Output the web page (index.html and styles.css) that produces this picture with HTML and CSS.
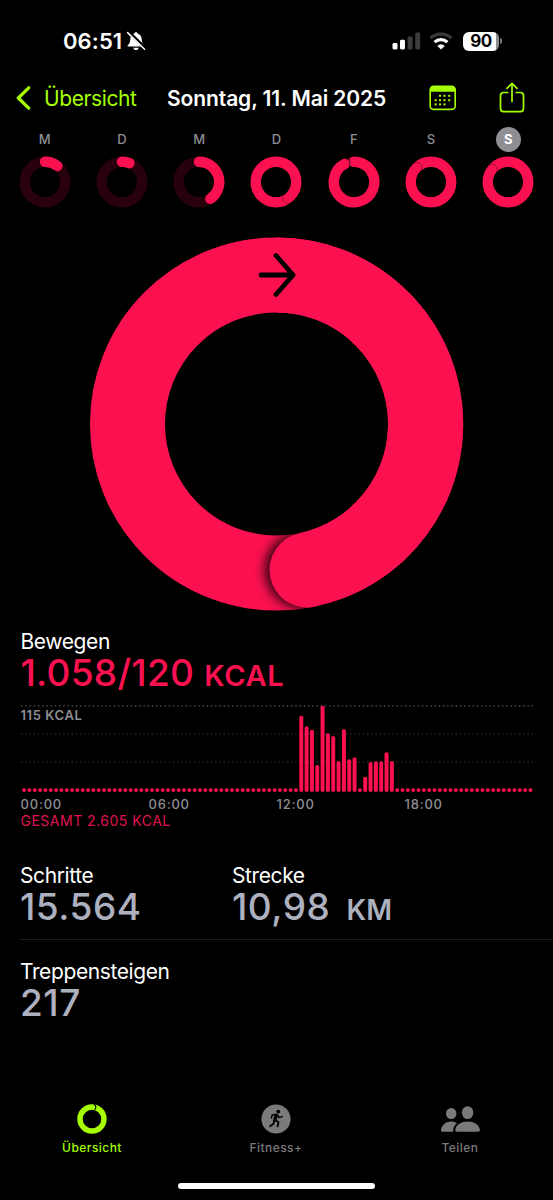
FILE: index.html
```
<!DOCTYPE html>
<html lang="de">
<head>
    <meta charset="UTF-8">
    <meta name="viewport" content="width=device-width, initial-scale=1.0">
    <title>Fitness - Übersicht</title>
    <link rel="stylesheet" href="styles.css">
</head>
<body>
    <div class="status-bar">
        <div class="status-left">
            <span class="clock">06:51</span>
            <svg class="bell" width="20" height="20" viewBox="0 0 20 20">
                <path d="M10 1.2c-1 0-1.7.6-1.9 1.5C5.700 3.500 4.500 5.500 4.300 8.200c-.2 3.300-1 4.500-2.300 5.700-.9.900-.5 1.700.5 1.700h15c1 0 1.400-.8.5-1.700-1.300-1.200-2.100-2.400-2.300-5.700-.2-2.700-1.400-4.700-3.800-5.500C11.700 1.800 11 1.200 10 1.200zM7.300 16.700h5.400c-.3 1.400-1.300 2.300-2.700 2.300s-2.400-.9-2.700-2.300z" fill="#fff"/>
                <path d="M2.200.8 19.600 17.600" stroke="#000" stroke-width="3.400"/>
                <path d="M1.600 1.600 18.500 18.200" stroke="#fff" stroke-width="1.500" stroke-linecap="round"/>
            </svg>
        </div>
        <div class="status-right">
            <svg width="29" height="18" viewBox="0 0 29 18">
                <rect x="0.500" y="11" width="5" height="6.500" rx="1.400" fill="#fff"/>
                <rect x="8" y="7.700" width="5" height="9.800" rx="1.400" fill="#fff"/>
                <rect x="15.600" y="4.400" width="5" height="13.100" rx="1.400" fill="#3c3c3e"/>
                <rect x="23.200" y="0.500" width="5" height="17" rx="1.400" fill="#3c3c3e"/>
            </svg>
            <svg class="wifi" width="24" height="18" viewBox="0 0 24 18">
                <path d="M1.600 6.200a15 15 0 0 1 20.800 0" fill="none" stroke="#3c3c3e" stroke-width="3.200"/>
                <path d="M5.600 10.200a9.300 9.300 0 0 1 12.800 0" fill="none" stroke="#fff" stroke-width="3.200"/>
                <path d="M12 17.600 8.300 13.900a5.200 5.200 0 0 1 7.400 0z" fill="#fff"/>
            </svg>
            <div class="battery"><span>90</span></div>
            <div class="battery-cap"></div>
        </div>
    </div>

    <div class="nav-bar">
        <a class="back" href="#">
            <svg width="15" height="24" viewBox="0 0 15 24">
                <path d="M12.700 1.800 2.300 12l10.400 10.200" fill="none" stroke="#a6ff00" stroke-width="3.200" stroke-linecap="round" stroke-linejoin="round"/>
            </svg>
            <span>Übersicht</span>
        </a>
        <h1>Sonntag, 11. Mai 2025</h1>
        <div class="nav-actions">
            <svg width="28" height="26" viewBox="0 0 28 26">
                <rect x="1.200" y="1.200" width="25" height="23.200" rx="3.500" fill="none" stroke="#a6ff00" stroke-width="1.600"/>
                <path d="M1 6.800V4.500A3.500 3.500 0 0 1 4.500 1h18.400a3.500 3.500 0 0 1 3.500 3.500v2.300z" fill="#a6ff00"/>
                <g fill="#a6ff00">
                    <rect x="10" y="9.800" width="2" height="2"/><rect x="14.500" y="9.800" width="2" height="2"/><rect x="19.200" y="9.800" width="2" height="2"/>
                    <rect x="5.600" y="14.200" width="2" height="2"/><rect x="10" y="14.200" width="2" height="2"/><rect x="14.500" y="14.200" width="2" height="2"/><rect x="19.200" y="14.200" width="2" height="2"/>
                    <rect x="5.600" y="18.400" width="2" height="2"/><rect x="10" y="18.400" width="2" height="2"/><rect x="14.500" y="18.400" width="2" height="2"/>
                </g>
            </svg>
            <svg width="26" height="32" viewBox="0 0 26 32">
                <g fill="none" stroke="#a6ff00" stroke-width="1.700" stroke-linecap="round" stroke-linejoin="round">
                    <path d="M8.800 10.500H4.700a3.200 3.200 0 0 0-3.200 3.200v12.800a3.200 3.200 0 0 0 3.200 3.200h16.600a3.200 3.200 0 0 0 3.200-3.200V13.700a3.200 3.200 0 0 0-3.200-3.200h-4.100"/>
                    <path d="M13 19.500V1.500M8 6.300l5-5 5 5"/>
                </g>
            </svg>
        </div>
    </div>

    <div class="week" id="week"></div>

    <div class="ring-wrap">
        <svg width="375" height="376" viewBox="-187.500 -188 375 376">
            <defs>
                <clipPath id="ringClip">
                    <path clip-rule="evenodd" d="M-186.500 0a186.500 186.500 0 1 0 373 0a186.500 186.500 0 1 0-373 0zM-111.500 0a111.500 111.500 0 1 1 223 0a111.500 111.500 0 1 1-223 0z"/>
                </clipPath>
                <filter id="soft" x="-50%" y="-50%" width="200%" height="200%">
                    <feGaussianBlur stdDeviation="6"/>
                </filter>
            </defs>
            <circle r="149" fill="none" stroke="#fb1150" stroke-width="75"/>
            <g clip-path="url(#ringClip)">
                <circle cx="27" cy="146" r="38.500" fill="#000" opacity=".85" filter="url(#soft)"/>
            </g>
            <path d="M0-149A149 149 0 0 1 30.500 145.900" fill="none" stroke="#fb1150" stroke-width="75"/>
            <circle cx="30.500" cy="145.900" r="37.500" fill="#fb1150"/>
            <path d="M-15.500-149H15.500M-.5-168.500 16.600-149-.5-129.500" fill="none" stroke="#000" stroke-width="4.800" stroke-linecap="round" stroke-linejoin="round"/>
        </svg>
    </div>

    <section class="move">
        <div class="label">Bewegen</div>
        <div class="value pink">1.058/120 <span class="unit">KCAL</span></div>
        <div class="chart">
            <svg class="grid-lines" width="513" height="60" viewBox="0 0 513 60">
                <g stroke-width="1.200" stroke-dasharray="1.400 2.820">
                    <path d="M0 .8H513" stroke="#58585a"/>
                    <path d="M0 29H513" stroke="#38383a"/>
                    <path d="M0 57H513" stroke="#38383a"/>
                </g>
            </svg>
            <span class="chart-max">115 KCAL</span>
            <svg class="bars" id="bars" width="513" height="87" viewBox="0 0 513 87"></svg>
        </div>
        <div class="hours">
            <span>00:00</span>
            <span>06:00</span>
            <span>12:00</span>
            <span>18:00</span>
        </div>
        <div class="total">GESAMT 2.605 KCAL</div>
    </section>

    <section class="stats">
        <div class="stat">
            <div class="label">Schritte</div>
            <div class="value">15.564</div>
        </div>
        <div class="stat">
            <div class="label">Strecke</div>
            <div class="value">10,98 <span class="unit km">KM</span></div>
        </div>
    </section>
    <section class="stats second">
        <div class="stat">
            <div class="label">Treppensteigen</div>
            <div class="value">217</div>
        </div>
    </section>

    <nav class="tab-bar">
        <a class="tab active" href="#">
            <svg width="30" height="30" viewBox="-15 -15 30 30">
                <circle r="12" fill="none" stroke="#a6ff00" stroke-width="5.400"/>
                <path d="M1.800-14.800C4.300-13.500 4.500-11 2.600-9.200" fill="none" stroke="#000" stroke-width="1.100"/>
            </svg>
            <span>Übersicht</span>
        </a>
        <a class="tab" href="#">
            <svg width="30" height="30" viewBox="0 0 30 30">
                <circle cx="15" cy="15" r="14.600" fill="#7a7a7a"/>
                <circle cx="17.300" cy="7.600" r="1.900" fill="#000"/>
                <g fill="none" stroke="#000" stroke-linecap="round" stroke-linejoin="round">
                    <path d="M15.300 11.300 13.800 15.800" stroke-width="3.400"/>
                    <path d="M14.500 10.500 11.300 11 10.300 14M16.600 11.300 18.200 13.600 21.300 12.600" stroke-width="1.500"/>
                    <path d="M14.500 16.200 17.500 18.300 16.600 22.300M13.300 16.500 12.300 20 9 22.300" stroke-width="1.900"/>
                </g>
            </svg>
            <span>Fitness+</span>
        </a>
        <a class="tab" href="#">
            <svg width="40" height="30" viewBox="0 0 40 30">
                <g fill="#7a7a7a">
                    <ellipse cx="11.200" cy="9.500" rx="5.200" ry="5.600"/>
                    <path d="M2.700 27.800C1.300 27.800.8 27 1 25.800 1.800 21 6 17.600 11.200 17.600c2.200 0 4.200.6 5.700 1.600-2.400 2-3.700 4.400-3.700 7 0 .6.100 1.200.3 1.600z"/>
                    <ellipse cx="27.600" cy="8.600" rx="5.700" ry="6.400"/>
                    <path d="M17.300 27.800c-1.500 0-2.300-.8-2-2.300.9-4.800 6-8 12.300-8s11.400 3.200 12.300 8c.3 1.500-.5 2.300-2 2.300z"/>
                </g>
            </svg>
            <span>Teilen</span>
        </a>
    </nav>
    <div class="home-indicator"></div>

    <script>
        // progress is in turns, more than 1 means the ring overlaps itself
        const days = [
            { name: 'M', progress: 0.105 },
            { name: 'D', progress: 0.06 },
            { name: 'M', progress: 0.405 },
            { name: 'D', progress: 1.40 },
            { name: 'F', progress: 0.925 },
            { name: 'S', progress: 1.88 },
            { name: 'S', progress: 4.86, selected: true }
        ];
        const R = 20.25;

        function point(turn, r) {
            const a = turn * 2 * Math.PI;
            return [(r * Math.sin(a)).toFixed(2), (-r * Math.cos(a)).toFixed(2)];
        }

        function ring(progress) {
            const part = progress % 1;
            const [x, y] = point(part, R);
            const base = progress > 1 ? '#fb1150' : '#28010c';
            let svg = `<svg width="52" height="52" viewBox="-26 -26 52 52"><circle r="${R}" fill="none" stroke="${base}" stroke-width="10.400"/>`;
            if (progress > 1) {
                // thin shadow line at the tip
                const [ax, ay] = point(part, R - 4.900);
                const [bx, by] = point(part, R + 4.900);
                svg += `<path d="M${ax} ${ay}A4.900 4.900 0 0 0 ${bx} ${by}" fill="none" stroke="#a00c36" stroke-width="1"/>`;
            } else {
                svg += `<path d="M0 ${-R}A${R} ${R} 0 ${part > 0.5 ? 1 : 0} 1 ${x} ${y}" fill="none" stroke="#fb1150" stroke-width="10.400" stroke-linecap="round"/>`;
                if (progress > 0.9) {
                    svg += `<path d="M-5.500-23.500C-4.300-21.500-4-18.500-4.500-15.500" fill="none" stroke="#5c0620" stroke-width="1"/>`;
                }
            }
            return svg + '</svg>';
        }

        document.getElementById('week').innerHTML = days.map(d => `
            <div class="day${d.selected ? ' selected' : ''}">
                <span>${d.name}</span>
                ${ring(d.progress)}
            </div>`).join('');

        // one bar per 15 minutes
        const bars = new Array(96).fill(3.8);
        const active = [76.3, 65.7, 62.3, 27, 86.3, 58.7, 56, 31, 63, 32.7, 34.7, 3.8, 15.3, 30, 30.7, 30.7, 39.7, 31];
        active.forEach((h, i) => bars[52 + i] = h);
        document.getElementById('bars').innerHTML = bars.map((h, i) =>
            `<rect x="${(1.1 + i * 5.33).toFixed(2)}" y="${(87 - h).toFixed(1)}" width="4" height="${h}" rx="1.900" fill="#fb1150"/>`
        ).join('');
    </script>
</body>
</html>
```

FILE: styles.css
```
* {
    margin: 0;
    padding: 0;
    box-sizing: border-box;
}

body {
    width: 553px;
    height: 1200px;
    background: #000;
    color: #fff;
    font-family: Inter, "Liberation Sans", sans-serif;
    display: flex;
    flex-direction: column;
    overflow: hidden;
}

a {
    color: inherit;
    text-decoration: none;
}

svg {
    display: block;
    flex: none;
}

span, .label, .value, .total {
    white-space: nowrap;
}

/* status bar */
.status-bar {
    height: 82px;
    padding: 0 51px 0 63px;
    display: flex;
    justify-content: space-between;
    align-items: center;
}

.status-left, .status-right {
    display: flex;
    align-items: center;
}

.clock {
    font-size: 22px;
    font-weight: 600;
    letter-spacing: 0.1px;
}

.bell {
    margin-left: 4px;
}

.wifi {
    margin: 0 10px 0 8px;
}

.battery {
    width: 36px;
    height: 19px;
    border-radius: 6px;
    background: linear-gradient(90deg, #fff 91%, #8e8e90 91%);
    color: #000;
    font-size: 17px;
    font-weight: 700;
    line-height: 19px;
    text-align: center;
    letter-spacing: -0.5px;
}

.battery-cap {
    width: 2px;
    height: 6px;
    margin-left: 1px;
    border-radius: 0 3px 3px 0;
    background: #77777a;
}

/* navigation */
.nav-bar {
    height: 32px;
    padding: 0 28px 0 16px;
    display: flex;
    align-items: center;
}

.back {
    width: 151px;
    display: flex;
    align-items: center;
    gap: 13px;
    color: #a6ff00;
    font-size: 21px;
    letter-spacing: -0.4px;
}

h1 {
    font-size: 21px;
    font-weight: 600;
    letter-spacing: -0.1px;
    white-space: nowrap;
}

.nav-actions {
    margin-left: auto;
    display: flex;
    align-items: center;
    gap: 42px;
}

/* week rings */
.week {
    height: 96px;
    padding: 13px 6px 0;
    display: flex;
}

.day {
    flex: 1;
    display: flex;
    flex-direction: column;
    align-items: center;
    gap: 4px;
}

.day span {
    width: 25px;
    height: 25px;
    border-radius: 50%;
    color: #8e8e93;
    font-size: 13px;
    font-weight: 500;
    line-height: 25px;
    text-align: center;
}

.day.selected span {
    background: #8e8e93;
    color: #fff;
    font-weight: 700;
}

.ring-wrap {
    height: 419px;
    padding-top: 26px;
    display: flex;
    justify-content: center;
}

/* move */
.move {
    height: 234px;
    padding: 0 20px 0 20.500px;
}

.label {
    font-size: 21px;
    line-height: 26px;
    letter-spacing: -0.4px;
}

.value {
    height: 36px;
    color: #adb1bf;
    font-size: 37px;
    font-weight: 500;
    line-height: 36px;
    letter-spacing: 0.5px;
}

.value.pink {
    color: #fb1150;
    letter-spacing: 0.25px;
}

.unit {
    font-size: 29px;
    font-weight: 600;
    letter-spacing: 0.7px;
}

.unit.km {
    margin-left: 6px;
    font-size: 28px;
    letter-spacing: 0;
}

.chart {
    position: relative;
    height: 87px;
    margin-top: 14px;
}

.grid-lines {
    position: absolute;
    top: 0;
    left: 0;
}

.chart-max {
    position: absolute;
    top: 2px;
    left: 0;
    color: #8e8e93;
    font-size: 13px;
    font-weight: 600;
    line-height: 16px;
    letter-spacing: 0.6px;
}

.bars {
    position: relative;
}

.hours {
    width: 512px;
    height: 16px;
    margin-top: 4px;
    display: grid;
    grid-template-columns: repeat(4, 1fr);
    color: #8e8e93;
    font-size: 13px;
    font-weight: 500;
    line-height: 16px;
    letter-spacing: 0.8px;
}

.total {
    color: #e01350;
    font-size: 14px;
    line-height: 18px;
    letter-spacing: 0.5px;
}

/* stats */
.stats {
    height: 77px;
    margin-left: 20px;
    border-bottom: 1px solid #1c1c1e;
    display: grid;
    grid-template-columns: 212px 1fr;
}

.stats.second {
    height: 64px;
    margin-top: 19px;
    border-bottom: none;
}

/* tabs */
.tab-bar {
    margin-top: 81px;
    height: 79px;
    display: grid;
    grid-template-columns: repeat(3, 184px);
    color: #7a7a7a;
}

.tab {
    display: flex;
    flex-direction: column;
    align-items: center;
    gap: 5px;
    font-size: 12px;
    font-weight: 500;
    line-height: 17px;
    letter-spacing: 0.45px;
}

.tab.active {
    color: #a6ff00;
}

.home-indicator {
    width: 197px;
    height: 6px;
    margin: 0 auto;
    border-radius: 3px;
    background: #fff;
}
```
